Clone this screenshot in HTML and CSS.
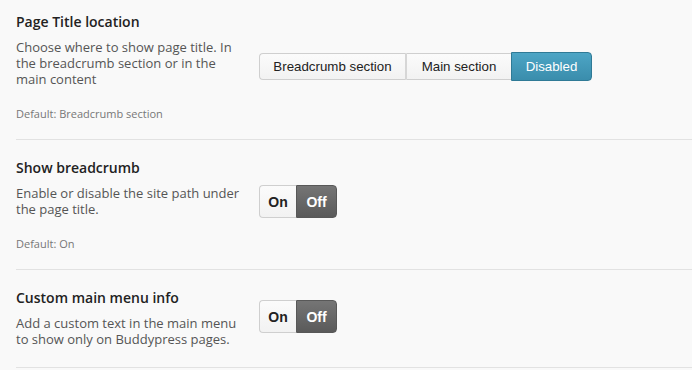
FILE: index.html
```html
<!DOCTYPE html>
<html>
<head>
<meta charset="utf-8">
<link rel="stylesheet" href="styles.css">
</head>
<body>
<div class="options">
  <div class="option first">
    <div class="info">
      <h3 class="title">Page Title location</h3>
      <p class="desc">Choose where to show page title. In the breadcrumb section or in the main content</p>
      <p class="default">Default: Breadcrumb section</p>
    </div>
    <div class="control">
      <div class="btn-group">
        <span class="btn btn-bc">Breadcrumb section</span>
        <span class="btn btn-main">Main section</span>
        <span class="btn btn-active">Disabled</span>
      </div>
    </div>
  </div>
  <div class="option">
    <div class="info">
      <h3 class="title">Show breadcrumb</h3>
      <p class="desc">Enable or disable the site path under the page title.</p>
      <p class="default">Default: On</p>
    </div>
    <div class="control">
      <div class="btn-group">
        <span class="btn btn-on">On</span>
        <span class="btn btn-off">Off</span>
      </div>
    </div>
  </div>
  <div class="option last">
    <div class="info">
      <h3 class="title">Custom main menu info</h3>
      <p class="desc">Add a custom text in the main menu to show only on Buddypress pages.</p>
    </div>
    <div class="control">
      <div class="btn-group">
        <span class="btn btn-on">On</span>
        <span class="btn btn-off">Off</span>
      </div>
    </div>
  </div>
</div>
</body>
</html>
```
FILE: styles.css
```css
html, body {
  margin: 0;
  padding: 0;
  background: #f9f9f9;
}
.options {
  padding-left: 16px;
}
.option {
  box-sizing: border-box;
  display: flex;
  align-items: flex-start;
  border-bottom: 1px solid #e2e2e2;
  padding-top: 18px;
  height: 130px;
}
.option.first {
  padding-top: 12px;
  height: 140px;
}
.option.last {
  height: 98px;
}
.info {
  width: 228px;
  font-family: "Open Sans", sans-serif;
}
.title {
  margin: 0;
  font-size: 14px;
  font-weight: 600;
  color: #222;
  line-height: 20px;
}
.desc {
  margin: 7px 0 0;
  font-size: 13px;
  line-height: 16px;
  color: #555;
}
.default {
  margin: 20px 0 0;
  font-size: 11px;
  line-height: 14px;
  color: #777;
}
.control {
  padding-left: 15px;
  align-self: stretch;
  display: flex;
  align-items: center;
}
.first .control {
  align-self: flex-start;
  padding-top: 40px;
}
.option:nth-child(2) .control {
  align-self: flex-start;
  padding-top: 27px;
}
.last .control {
  align-self: flex-start;
  padding-top: 12px;
}
.btn-group {
  display: flex;
  align-items: center;
  font-family: "Liberation Sans", Arial, sans-serif;
  font-size: 13px;
  color: #222;
}
.btn {
  display: flex;
  align-items: center;
  justify-content: center;
  background: linear-gradient(#fbfbfb, #f2f2f2);
  border: 1px solid #cfcfcf;
  box-sizing: border-box;
}
.btn-bc {
  width: 148px;
  height: 27px;
  border-radius: 4px 0 0 4px;
  border-right: 2px solid #d6d6d6;
  font-size: 13.3px;
}
.btn-main {
  width: 104px;
  height: 27px;
  border-left: none;
  border-right: none;
  font-size: 13.3px;
}
.btn-active {
  width: 81px;
  height: 29px;
  background: linear-gradient(#4da5c5, #3a8dac);
  border: 1px solid #2f7a96;
  border-radius: 0 4px 4px 0;
  color: #fff;
  font-size: 13.3px;
}
.btn-on {
  width: 37px;
  height: 33px;
  border-radius: 4px 0 0 4px;
  border-right: none;
  font-weight: bold;
  font-size: 14px;
}
.btn-off {
  width: 41px;
  height: 33px;
  border-radius: 0 4px 4px 0;
  background: linear-gradient(#757575, #5a5a5a);
  border: 1px solid #585858;
  color: #fff;
  font-weight: bold;
  font-size: 14px;
}
```
